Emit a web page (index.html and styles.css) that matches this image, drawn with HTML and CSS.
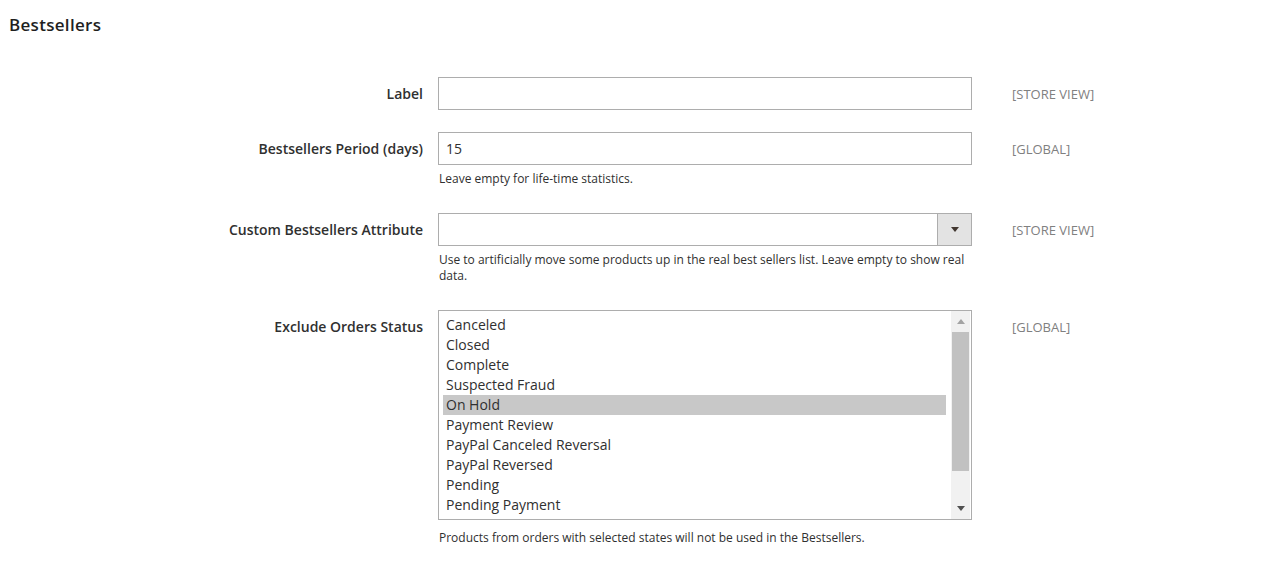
FILE: index.html
```html
<!DOCTYPE html>
<html lang="en">
<head>
<meta charset="utf-8">
<title>Bestsellers</title>
<link rel="stylesheet" href="styles.css">
</head>
<body>
<div class="page">
  <h2 class="section-title">Bestsellers</h2>
  <div class="form">
    <div class="row">
      <label class="label">Label</label>
      <div class="control">
        <div class="input"></div>
      </div>
      <div class="scope">[STORE VIEW]</div>
    </div>
    <div class="row">
      <label class="label">Bestsellers Period (days)</label>
      <div class="control">
        <div class="input">15</div>
        <p class="note">Leave empty for life-time statistics.</p>
      </div>
      <div class="scope">[GLOBAL]</div>
    </div>
    <div class="row row-select">
      <label class="label">Custom Bestsellers Attribute</label>
      <div class="control">
        <div class="select">
          <div class="select-value"></div>
          <div class="select-button"><span class="tri-down dark"></span></div>
        </div>
        <p class="note">Use to artificially move some products up in the real best sellers list. Leave empty to show real data.</p>
      </div>
      <div class="scope">[STORE VIEW]</div>
    </div>
    <div class="row">
      <label class="label">Exclude Orders Status</label>
      <div class="control">
        <div class="listbox">
          <ul class="options">
            <li>Canceled</li>
            <li>Closed</li>
            <li>Complete</li>
            <li>Suspected Fraud</li>
            <li class="selected">On Hold</li>
            <li>Payment Review</li>
            <li>PayPal Canceled Reversal</li>
            <li>PayPal Reversed</li>
            <li>Pending</li>
            <li>Pending Payment</li>
          </ul>
          <div class="scrollbar">
            <div class="sb-arrow sb-up"><span class="tri-up"></span></div>
            <div class="sb-track"><div class="sb-thumb"></div></div>
            <div class="sb-arrow sb-down"><span class="tri-down"></span></div>
          </div>
        </div>
        <p class="note note-list">Products from orders with selected states will not be used in the Bestsellers.</p>
      </div>
      <div class="scope">[GLOBAL]</div>
    </div>
  </div>
</div>
</body>
</html>
```

FILE: styles.css
```css
* { box-sizing: border-box; }
html, body { margin: 0; padding: 0; background: #ffffff; }
body {
  font-family: "Open Sans", "Liberation Sans", sans-serif;
  color: #303030;
  font-size: 14px;
}
.page { padding: 14px 0 0 9px; }
.section-title {
  margin: 0;
  font-size: 17px;
  font-weight: 600;
  line-height: 22px;
  letter-spacing: 0.3px;
  color: #1f1f1f;
}
.form { padding-top: 41px; }
.row {
  display: grid;
  grid-template-columns: 429px 534px auto;
  margin-bottom: 26px;
}
.row:first-child { margin-bottom: 22px; }
.label {
  text-align: right;
  font-weight: 600;
  font-size: 14px;
  line-height: 19px;
  padding: 7px 15px 0 0;
  color: #303030;
}
.control { width: 534px; }
.input {
  height: 33px;
  border: 1px solid #adadad;
  background: #fff;
  padding: 0 7px;
  font-size: 14px;
  line-height: 31px;
  color: #303030;
}
.note {
  margin: 6px 0 0 1px;
  font-size: 12px;
  line-height: 16px;
  color: #303030;
}
.row-select .note { padding-right: 4px; }
.note.note-list { margin-top: 10px; }
.scope {
  padding: 8px 0 0 40px;
  font-size: 13px;
  line-height: 18px;
  color: #808080;
}
.select {
  display: flex;
  height: 33px;
  border: 1px solid #adadad;
  background: #fff;
}
.select-value { flex: 1; }
.select-button {
  width: 34px;
  border-left: 1px solid #adadad;
  background: #e3e3e3;
  display: flex;
  align-items: center;
  justify-content: center;
}
.tri-down, .tri-up {
  width: 0; height: 0;
  border-left: 4px solid transparent;
  border-right: 4px solid transparent;
}
.tri-down { border-top: 5px solid #505050; }
.tri-up { border-bottom: 5px solid #a3a3a3; }
.tri-down.dark { border-top-color: #41362f; }
.listbox {
  display: flex;
  height: 210px;
  border: 1px solid #adadad;
  background: #fff;
}
.options {
  list-style: none;
  margin: 0;
  padding: 4px 5px 0 4px;
  flex: 1;
  overflow: hidden;
}
.options li {
  height: 20px;
  line-height: 20px;
  padding-left: 3px;
  font-size: 14px;
  color: #303030;
  white-space: nowrap;
}
.options li.selected { background: #c8c8c8; }
.scrollbar {
  width: 19px;
  margin-right: 1px;
  background: #f1f1f1;
  display: flex;
  flex-direction: column;
}
.sb-arrow {
  display: flex;
  align-items: center;
  justify-content: center;
}
.sb-up { height: 21px; }
.sb-down { height: 22px; }
.sb-track { flex: 1; padding: 0 1px; }
.sb-thumb { height: 139px; background: #c1c1c1; }
```
